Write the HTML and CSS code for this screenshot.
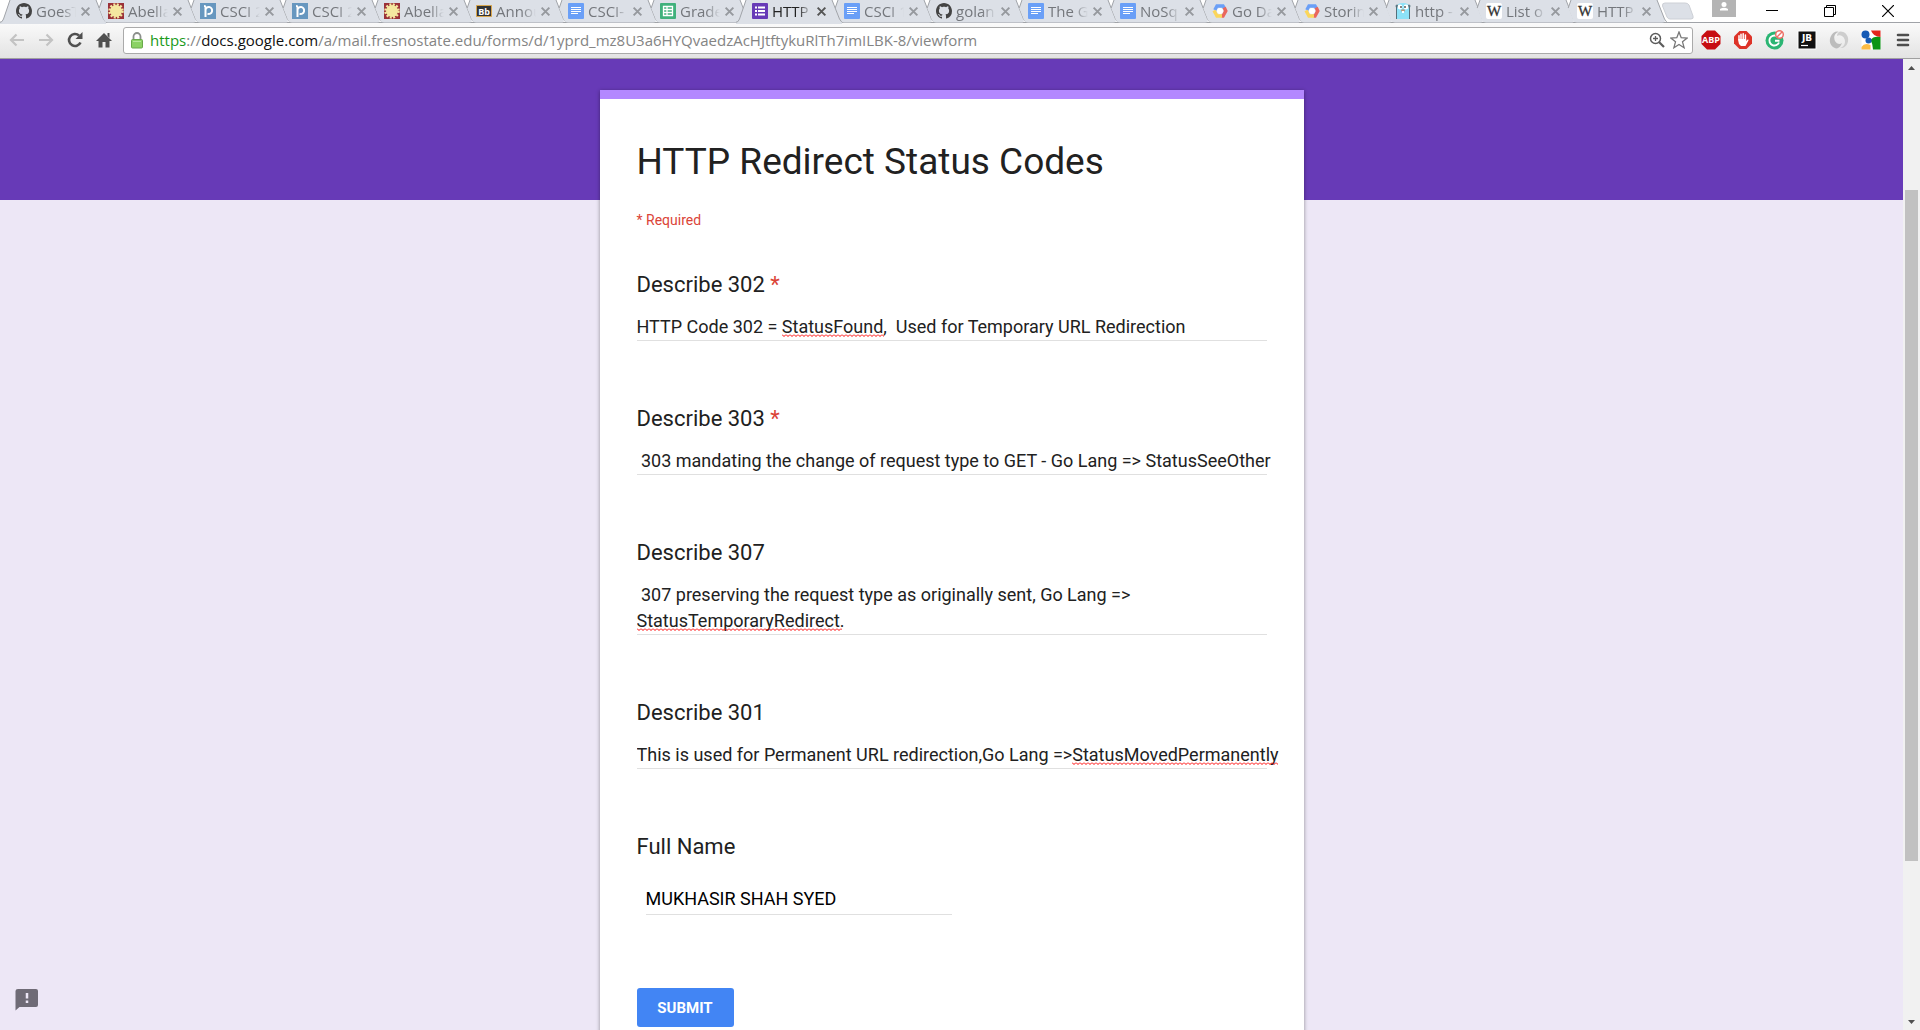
FILE: index.html
```html
<!DOCTYPE html>
<html lang="en">
<head>
<meta charset="utf-8">
<title>HTTP Redirect Status Codes</title>
<link rel="stylesheet" href="styles.css">
</head>
<body>
<svg class="defs" aria-hidden="true">
  <symbol id="tab" viewBox="0 0 106 24"><path class="tab-fill" d="M10 0L7.200 8L12 20Q13 22.500 16 22.500H101Q105 22.500 103.500 19L96 0Z"/><path class="tab-line" d="M10 0L7.200 8M96 0L103.500 19Q105 22.500 108 22.500"/></symbol>
  <symbol id="tab-full" viewBox="0 0 106 24"><path class="tab-fill" d="M10 0L3.500 19Q2.500 22.500 -1 22.500V24H108V22.500Q105 22.500 103.500 19L96 0Z"/><path class="tab-line" d="M10 0L3.500 19Q2.500 22.500 -1 22.500M96 0L103.500 19Q105 22.500 108 22.500"/></symbol>
  <symbol id="x" viewBox="0 0 10 10"><path d="M1.500 1.500L8.500 8.500M8.500 1.500L1.500 8.500" fill="none" stroke="currentColor" stroke-width="1.800"/></symbol>
  <symbol id="github" viewBox="0 0 16 16"><path fill="#444" d="M8 0C3.580 0 0 3.580 0 8c0 3.540 2.290 6.530 5.470 7.590.4.070.55-.17.55-.38 0-.19-.01-.82-.01-1.490-2.010.37-2.530-.49-2.690-.94-.09-.23-.48-.94-.82-1.130-.28-.15-.68-.52-.01-.53.63-.01 1.080.58 1.230.82.72 1.210 1.870.87 2.330.66.070-.52.28-.87.51-1.070-1.780-.2-3.640-.89-3.640-3.950 0-.87.31-1.590.82-2.150-.08-.2-.36-1.020.08-2.120 0 0 .67-.21 2.200.82.64-.18 1.320-.27 2-.27s1.360.09 2 .27c1.530-1.040 2.200-.82 2.200-.82.44 1.100.16 1.920.08 2.120.51.56.82 1.270.82 2.150 0 3.070-1.870 3.750-3.650 3.950.29.25.54.73.54 1.480 0 1.070-.01 1.930-.01 2.200 0 .21.15.46.55.38A8 8 0 0 0 16 8c0-4.420-3.580-8-8-8z"/></symbol>
  <symbol id="abella" viewBox="0 0 16 16"><path fill="#9b3138" d="M0 0h16v16H0z"/><circle cx="8" cy="8" r="6" fill="#f4e8a0"/><circle cx="8" cy="8" r="6.500" fill="none" stroke="#f4e8a0" stroke-width="2.500" stroke-dasharray="2 1.400"/></symbol>
  <symbol id="piazza" viewBox="0 0 16 16"><path fill="#6797bf" d="M0 0h16v16H0z"/><path d="M5.500 14V4Q5.500 3 4 3M5.500 7.500a3.300 3.500 0 1 1 2 3.200" fill="none" stroke="#fff" stroke-width="2"/></symbol>
  <symbol id="bb" viewBox="0 0 16 16"><path fill="#333" stroke="#d8a64d" d="M.5 2.500h15v11H.5z"/><text x="8" y="12" text-anchor="middle" font-family="Open Sans,sans-serif" font-size="9" font-weight="700" fill="#fff">Bb</text></symbol>
  <symbol id="doc" viewBox="0 0 16 16"><rect width="16" height="16" rx="1" fill="#6a9ff7"/><path d="M3 4.500h10M3 6.500h10M3 8.500h10M3 10.500h7" stroke="#fff" fill="none"/></symbol>
  <symbol id="sheet" viewBox="0 0 16 16"><rect width="16" height="16" rx="1" fill="#40b17c"/><path d="M3.500 3.500h9v9h-9zM3.500 6.500h9M3.500 9.500h9M7 3.500v9" stroke="#fff" stroke-width="1.300" fill="none"/></symbol>
  <symbol id="form" viewBox="0 0 16 16"><rect width="16" height="16" rx="1" fill="#673ab7"/><path d="M3 4.500h2M6 4.500h7M3 8h2M6 8h7M3 11.500h2M6 11.500h7" stroke="#fff" stroke-width="2" fill="none"/></symbol>
  <symbol id="cloud" viewBox="0 0 16 16"><g fill="none" stroke-width="3.400"><path d="M2.800 7L5 3H11L12.500 5.500" stroke="#6a9ff7"/><path d="M12.200 4.500L13.800 8L11 13H9.500" stroke="#ea675c"/><path d="M10 13H5L2 7.500" stroke="#fbd65b"/></g><circle cx="8" cy="8" r="3" fill="#fff"/></symbol>
  <symbol id="gopher" viewBox="0 0 16 16"><path d="M2 16V4Q2 0 8 0t6 4v12z" fill="#8de2f8"/><circle cx="2" cy="3" r="1.500" fill="#5d7c89"/><circle cx="14" cy="3" r="1.500" fill="#5d7c89"/><path d="M1.500 3v13M14.500 3v13" stroke="#556f7a"/><circle cx="5" cy="4" r="2.400" fill="#fff"/><circle cx="11" cy="4" r="2.400" fill="#fff"/><path d="M6 3v2M10 3v2" stroke="#333" stroke-width="1.200"/><ellipse cx="8" cy="7.500" rx="2" ry="1.300" fill="#b9987c"/><path d="M7 8h2v2H7z" fill="#fff"/></symbol>
  <symbol id="wiki" viewBox="0 0 16 16"><rect width="16" height="16" rx="2" fill="#fff"/><text x="8" y="13" text-anchor="middle" font-family="Liberation Serif,serif" font-size="15" fill="#333" stroke="#333" stroke-width=".3">W</text></symbol>
</svg>

<header class="browser">
  <div class="strip">
    <nav class="tabs" aria-label="Tabs">
      <div class="tab first"><svg class="shape"><use href="#tab-full"/></svg><svg class="fav"><use href="#github"/></svg><span>GoesT</span><button aria-label="Close"><svg><use href="#x"/></svg></button></div>
      <div class="tab"><svg class="shape"><use href="#tab"/></svg><svg class="fav"><use href="#abella"/></svg><span>Abella</span><button aria-label="Close"><svg><use href="#x"/></svg></button></div>
      <div class="tab"><svg class="shape"><use href="#tab"/></svg><svg class="fav"><use href="#piazza"/></svg><span>CSCI 2</span><button aria-label="Close"><svg><use href="#x"/></svg></button></div>
      <div class="tab"><svg class="shape"><use href="#tab"/></svg><svg class="fav"><use href="#piazza"/></svg><span>CSCI 2</span><button aria-label="Close"><svg><use href="#x"/></svg></button></div>
      <div class="tab"><svg class="shape"><use href="#tab"/></svg><svg class="fav"><use href="#abella"/></svg><span>Abella</span><button aria-label="Close"><svg><use href="#x"/></svg></button></div>
      <div class="tab"><svg class="shape"><use href="#tab"/></svg><svg class="fav"><use href="#bb"/></svg><span>Annou</span><button aria-label="Close"><svg><use href="#x"/></svg></button></div>
      <div class="tab"><svg class="shape"><use href="#tab"/></svg><svg class="fav"><use href="#doc"/></svg><span>CSCI-</span><button aria-label="Close"><svg><use href="#x"/></svg></button></div>
      <div class="tab"><svg class="shape"><use href="#tab"/></svg><svg class="fav"><use href="#sheet"/></svg><span>Grade</span><button aria-label="Close"><svg><use href="#x"/></svg></button></div>
      <div class="tab active"><svg class="shape"><use href="#tab-full"/></svg><svg class="fav"><use href="#form"/></svg><span>HTTP</span><button aria-label="Close"><svg><use href="#x"/></svg></button></div>
      <div class="tab"><svg class="shape"><use href="#tab"/></svg><svg class="fav"><use href="#doc"/></svg><span>CSCI 1</span><button aria-label="Close"><svg><use href="#x"/></svg></button></div>
      <div class="tab"><svg class="shape"><use href="#tab"/></svg><svg class="fav"><use href="#github"/></svg><span>golan</span><button aria-label="Close"><svg><use href="#x"/></svg></button></div>
      <div class="tab"><svg class="shape"><use href="#tab"/></svg><svg class="fav"><use href="#doc"/></svg><span>The G</span><button aria-label="Close"><svg><use href="#x"/></svg></button></div>
      <div class="tab"><svg class="shape"><use href="#tab"/></svg><svg class="fav"><use href="#doc"/></svg><span>NoSq</span><button aria-label="Close"><svg><use href="#x"/></svg></button></div>
      <div class="tab"><svg class="shape"><use href="#tab"/></svg><svg class="fav"><use href="#cloud"/></svg><span>Go Da</span><button aria-label="Close"><svg><use href="#x"/></svg></button></div>
      <div class="tab"><svg class="shape"><use href="#tab"/></svg><svg class="fav"><use href="#cloud"/></svg><span>Storin</span><button aria-label="Close"><svg><use href="#x"/></svg></button></div>
      <div class="tab"><svg class="shape"><use href="#tab"/></svg><svg class="fav"><use href="#gopher"/></svg><span>http -</span><button aria-label="Close"><svg><use href="#x"/></svg></button></div>
      <div class="tab"><svg class="shape"><use href="#tab"/></svg><svg class="fav"><use href="#wiki"/></svg><span>List o</span><button aria-label="Close"><svg><use href="#x"/></svg></button></div>
      <div class="tab"><svg class="shape"><use href="#tab"/></svg><svg class="fav"><use href="#wiki"/></svg><span>HTTP</span><button aria-label="Close"><svg><use href="#x"/></svg></button></div>
    </nav>
    <button class="newtab" aria-label="New tab"><svg width="34" height="18" viewBox="0 0 34 18"><path d="M4 1H24Q27 1 28 3L32 14Q33 17 30 17H9Q7 17 6 15L1.500 4Q1 1 4 1Z" fill="#dce0e7" stroke="#cdd0d6"/></svg></button>
    <div class="window">
      <button class="user" aria-label="Profile"><svg width="24" height="17" viewBox="0 0 24 17"><path fill="#b4b4b4" d="M0 0h24v17H0z"/><circle cx="12" cy="4.500" r="2.500" fill="#fff"/><path fill="#fff" d="M8 10.500V9q4-2.500 8 0v1.500z"/></svg></button>
      <button aria-label="Minimize"><svg width="12" height="12" viewBox="0 0 12 12"><path d="M0 5.500h12" stroke="#000"/></svg></button>
      <button aria-label="Restore"><svg width="12" height="12" viewBox="0 0 12 12"><path d="M.5 2.500h9v9h-9zM2.500 2.500v-2h9v9h-2" fill="none" stroke="#000"/></svg></button>
      <button aria-label="Close window"><svg width="12" height="12" viewBox="0 0 12 12"><path d="M0 0l12 12M12 0L0 12" stroke="#000" stroke-width="1.200"/></svg></button>
    </div>
  </div>
  <div class="toolbar">
    <div class="nav">
      <button aria-label="Back"><svg width="18" height="18" viewBox="0 0 18 18"><path d="M16 9H3M8.500 3.500L3 9l5.500 5.500" fill="none" stroke="#c3c3c3" stroke-width="2.200"/></svg></button>
      <button aria-label="Forward"><svg width="18" height="18" viewBox="0 0 18 18"><path d="M2 9h13M9.500 3.500L15 9l-5.500 5.500" fill="none" stroke="#c3c3c3" stroke-width="2.200"/></svg></button>
      <button aria-label="Reload"><svg width="18" height="18" viewBox="0 0 18 18"><path d="M14.500 11.500A6 6 0 1 1 13 4.500" fill="none" stroke="#505050" stroke-width="2.600"/><path d="M16.500 1v7h-7z" fill="#505050"/></svg></button>
      <button aria-label="Home"><svg width="18" height="18" viewBox="0 0 18 18"><path d="M9 2l8 8h-2.500v6.500h-4V11h-3v5.500h-4V10H1zM12.500 2h2v5l-2-2z" fill="#505050"/></svg></button>
    </div>
    <div class="omnibox">
      <svg width="12" height="17" viewBox="0 0 12 17"><path d="M2.500 8V4.500a3.500 3.500 0 0 1 7 0V8" fill="none" stroke="#8b8f8b" stroke-width="1.800"/><rect x=".5" y="7.500" width="11" height="8.500" rx="1" fill="#8bd264" stroke="#69a84b"/><path d="M2 9.500h8" stroke="#b5e79c"/></svg>
      <div class="url" tabindex="0"><span class="scheme">https</span>://<span class="host">docs.google.com</span>/a/mail.fresnostate.edu/forms/d/1yprd_mz8U3a6HYQvaedzAcHJtftykuRlTh7imILBK-8/viewform</div>
      <button aria-label="Zoom"><svg width="18" height="18" viewBox="0 0 18 18"><circle cx="7.500" cy="7.500" r="5" fill="none" stroke="#5c5c5c" stroke-width="1.500"/><path d="M5 7.500h5M7.500 5v5" stroke="#5c5c5c" stroke-width="1.300"/><path d="M11 11l5 5" stroke="#5c5c5c" stroke-width="2.200"/></svg></button>
      <button aria-label="Bookmark"><svg width="18" height="18" viewBox="0 0 18 18"><path d="M9 1l2.200 5.700 6 .3-4.700 3.800 1.600 5.900L9 13.400l-5.100 3.300 1.600-5.900L.8 7l6-.3z" fill="#fff" stroke="#777" stroke-width="1.300"/></svg></button>
    </div>
    <div class="ext">
      <button aria-label="Adblock Plus"><svg width="20" height="20" viewBox="0 0 20 20"><path d="M6 .5h8L19.500 6v8L14 19.500H6L.5 14V6z" fill="#c70d12"/><text x="10" y="13" text-anchor="middle" font-family="Open Sans,sans-serif" font-size="9" font-weight="700" fill="#fff">ABP</text></svg></button>
      <button aria-label="AdBlock"><svg width="20" height="20" viewBox="0 0 20 20"><path d="M6.500 1h7L19 6.500v7L13.500 19h-7L1 13.500v-7z" fill="#dd3328"/><path d="M6 10V5.800M8 10V4.200M10.200 10V3.800M12.400 10V5" stroke="#fff" stroke-width="1.500" stroke-linecap="round"/><path d="M5.300 9h7.800v2l1.600-1.600q1.500 0 .6 1.400L12.500 16H8q-2.700-1.500-2.700-5z" fill="#fff"/></svg></button>
      <button aria-label="Grammarly"><svg width="20" height="20" viewBox="0 0 20 20"><circle cx="9.500" cy="10.500" r="9" fill="#2bb573"/><path d="M11.500 6A5 5 0 1 0 14 12.500M14.500 10.800H10" fill="none" stroke="#fff" stroke-width="1.900"/><circle cx="14.500" cy="4.500" r="3.800" fill="#fff" stroke="#ee7067" stroke-width="1.500"/><path d="M12 7l5-5" stroke="#ee7067" stroke-width="1.500"/></svg></button>
      <button aria-label="JetBrains"><svg width="20" height="20" viewBox="0 0 20 20"><path d="M1 1h18v18H1z" fill="#111" stroke="#fff"/><path d="M4 15.500h7" stroke="#fff" stroke-width="1.200"/><text x="10" y="11" text-anchor="middle" font-family="DejaVu Sans,sans-serif" font-size="9" font-weight="700" fill="#fff">JB</text></svg></button>
      <button aria-label="JSON viewer"><svg width="20" height="20" viewBox="0 0 20 20"><path d="M8 18.500C2 17.500-.5 12 1.500 7S8 .5 10 2c-5 1-5.500 6-4 9s5 4 7 2c-1 3-3 5-5 5.500z" fill="#bcbcbc"/><path d="M11 1.500c6 0 9 5 8 10s-5 7-8 6.500c4-1 6-5 4.500-9S10 4.500 8 6c0-2 1-4 3-4.500z" fill="#cecece"/></svg></button>
      <button aria-label="Google"><svg width="20" height="20" viewBox="0 0 20 20"><path d="M.5.5h19v19H.5z" fill="#fff"/><path d="M10 .5h9.500v6.500q-7 0-9.500-6.500" fill="#e3261c"/><path d="M9.500 10q3-4.500 10-3v12.500H12Q12 14 9.500 10" fill="#0c9414"/><path d="M.5 17q3-5 9-2v4.500h-9z" fill="#fbbc45"/><circle cx="4.500" cy="4.500" r="4" fill="#155ab5"/><circle cx="7.500" cy="10.500" r="3" fill="#155ab5"/></svg></button>
      <button aria-label="Menu"><svg width="20" height="20" viewBox="0 0 20 20"><path d="M5 5h10M5 10h10M5 15h10" stroke="#4d4d4d" stroke-width="2.600" stroke-linecap="round"/></svg></button>
    </div>
  </div>
</header>

<div class="view">
  <main class="page">
    <form class="card">
      <h1>HTTP Redirect Status Codes</h1>
      <p class="required">* Required</p>
      <div class="item">
        <label for="q302">Describe 302 <b>*</b></label>
        <div class="field"><textarea id="q302" rows="1" spellcheck="false">HTTP Code 302 = StatusFound,  Used for Temporary URL Redirection</textarea><i class="spell found"></i></div>
      </div>
      <div class="item">
        <label for="q303">Describe 303 <b>*</b></label>
        <div class="field"><textarea id="q303" rows="1" spellcheck="false"> 303 mandating the change of request type to GET - Go Lang =&gt; StatusSeeOther</textarea></div>
      </div>
      <div class="item">
        <label for="q307">Describe 307</label>
        <div class="field"><textarea id="q307" rows="2" spellcheck="false"> 307 preserving the request type as originally sent, Go Lang =&gt; StatusTemporaryRedirect.</textarea><i class="spell temporary"></i></div>
      </div>
      <div class="item">
        <label for="q301">Describe 301</label>
        <div class="field"><textarea id="q301" rows="1" spellcheck="false">This is used for Permanent URL redirection,Go Lang =&gt;StatusMovedPermanently</textarea><i class="spell moved"></i></div>
      </div>
      <div class="item">
        <label for="name">Full Name</label>
        <input id="name" type="text" value="MUKHASIR SHAH SYED">
      </div>
      <button class="submit" type="button">SUBMIT</button>
    </form>
    <button class="report" aria-label="Report a problem"><svg width="24" height="24" viewBox="0 0 24 24"><path d="M3 1h18q2 0 2 2v14q0 2-2 2H4.500L.5 22.500V3Q.5 1 3 1z" fill="#6f6b76"/><path d="M12 5v5.500M12 12.500V15" stroke="#ede7f6" stroke-width="2.500"/></svg></button>
  </main>
  <div class="scrollbar" aria-hidden="true">
    <svg width="17" height="17" viewBox="0 0 17 17"><path d="M5 11h7L8.500 7z" fill="#505050"/></svg>
    <div class="track"><div class="thumb"></div></div>
    <svg width="17" height="17" viewBox="0 0 17 17"><path d="M5 7h7l-3.500 4z" fill="#505050"/></svg>
  </div>
</div>
</body>
</html>
```
FILE: styles.css
```css
* { box-sizing: border-box; }

body {
  margin: 0;
  height: 100vh;
  display: flex;
  flex-direction: column;
  overflow: hidden;
  font-family: Roboto, sans-serif;
  color: #212121;
}

button {
  padding: 0;
  border: 0;
  background: none;
  font: inherit;
}

svg { display: block; }
.defs { position: absolute; width: 0; height: 0; }

/* Browser frame */
.browser { flex: none; font-family: "Open Sans", sans-serif; }

.strip {
  display: flex;
  height: 23px;
  background: #fff;
  border-bottom: 1px solid #a0a3a8;
}

.tabs { display: flex; }

.tab {
  position: relative;
  display: flex;
  align-items: center;
  flex: none;
  width: 92px;
  height: 22px;
  padding-left: 16px;
  font-size: 15px;
  line-height: 20px;
  color: #74777c;
}
.tab:nth-child(n+15) { width: 91px; }

.shape {
  position: absolute;
  left: 0;
  top: 0;
  width: 106px;
  height: 24px;
}
.tab-fill { fill: #dce0e7; }
.tab-line { fill: none; stroke: #a0a3a8; }
.active { z-index: 1; color: #222; }
.active .tab-fill { fill: #f9f9f9; }

.fav { position: relative; flex: none; width: 16px; height: 16px; }

.tab span {
  position: relative;
  width: 40px;
  margin: 0 4px;
  overflow: hidden;
  white-space: nowrap;
  -webkit-mask-image: linear-gradient(to right, #000 65%, transparent);
  mask-image: linear-gradient(to right, #000 65%, transparent);
}
.tab button { position: relative; color: #96999e; }
.tab button svg { width: 11px; height: 11px; }
.tab.active button { color: #555; }

.newtab { align-self: flex-start; margin: 2px 0 0 9px; }

.window {
  display: flex;
  align-items: center;
  gap: 46px;
  margin-left: auto;
  padding-right: 26px;
}
.user { align-self: flex-start; margin-right: -16px; }

.toolbar {
  display: flex;
  align-items: center;
  height: 36px;
  padding: 0 7px 1px 8px;
  background: linear-gradient(#fafafa, #e3e3e3);
  border-bottom: 1px solid #a0a0a0;
}

.nav { display: flex; gap: 11px; }

.omnibox {
  flex: 1;
  display: flex;
  align-items: center;
  gap: 4px;
  height: 27px;
  margin: 0 8px 0 10px;
  padding: 0 4px 0 7px;
  background: #fff;
  border: 1px solid #aaa;
  border-radius: 3px;
}

.url {
  flex: 1;
  margin-left: 3px;
  font-size: 15px;
  line-height: 24px;
  color: #848484;
  white-space: nowrap;
}
.scheme { color: #1a9a1a; }
.host { color: #111; }

.ext { display: flex; gap: 12px; }

/* Page area */
.view { flex: 1; display: flex; min-height: 0; }

.page {
  position: relative;
  flex: 1;
  padding-top: 31px;
  overflow: hidden;
  background: linear-gradient(#673ab7 141px, #ede7f6 141px);
}

.card {
  max-width: 704px;
  min-height: 100%;
  margin: 0 auto;
  padding: 40px 37px;
  background: #fff;
  border-top: 9px solid #b388ff;
  box-shadow: 0 1px 4px rgba(0, 0, 0, .4);
}

h1 {
  margin: 0;
  font-size: 37px;
  font-weight: 400;
  line-height: 46px;
}

.required {
  margin: 26px 0 0;
  font-size: 14px;
  line-height: 18px;
  color: #db4437;
}

.item { margin-top: 64px; }
.required + .item { margin-top: 42px; }

.item label {
  display: block;
  font-size: 22px;
  line-height: 28px;
}
.item b { font-weight: 400; color: #db4437; }

.field {
  position: relative;
  margin-top: 15px;
  border-bottom: 1px solid #e0e0e0;
}

textarea, input {
  display: block;
  padding: 0;
  border: 0;
  background: none;
  font: 18px/26px Roboto, sans-serif;
  color: #212121;
  outline: 0;
}

/* The writing area runs a little past its rule, into the card's padding */
textarea {
  width: calc(100% + 24px);
  resize: none;
  overflow: hidden;
}

input {
  width: 306px;
  height: 32px;
  margin: 22px 0 0 9px;
  border-bottom: 1px solid #e0e0e0;
  color: #000;
}

.spell {
  position: absolute;
  bottom: 3px;
  height: 3px;
  background: url("data:image/svg+xml,%3Csvg xmlns='http://www.w3.org/2000/svg' width='4' height='3'%3E%3Cpath d='M0 .5L2 2.500L4 .5' fill='none' stroke='red'/%3E%3C/svg%3E") repeat-x;
}
.found { left: 145px; width: 102px; }
.temporary { left: 0; width: 205px; }
.moved { left: 435px; width: 206px; }

.submit {
  margin-top: 73px;
  width: 97px;
  height: 39px;
  border-radius: 3px;
  background: #4285f4;
  color: #fff;
  font-size: 15px;
  font-weight: 700;
}

.report { position: absolute; left: 15px; bottom: 18px; }

/* Scrollbar */
.scrollbar {
  display: flex;
  flex-direction: column;
  width: 17px;
  background: #f1f1f1;
}
.track { flex: 1; padding: 114px 2px 0; }
.thumb { height: calc(82% - 4px); background: #c1c1c1; }
```
